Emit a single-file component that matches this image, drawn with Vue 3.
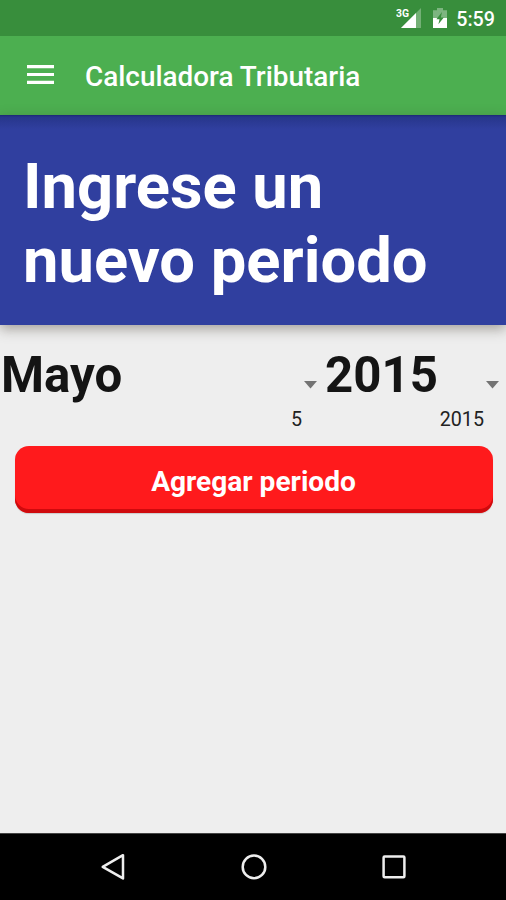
<script setup>
const month = { name: 'Mayo', value: '5' }
const year = { name: '2015', value: '2015' }
</script>

<template>
  <div class="screen">
    <div class="status">
      <svg class="signal" width="27" height="24" viewBox="0 0 27 24" aria-hidden="true">
        <path d="M25 4V24H5Z" fill="#fff" fill-opacity=".3" />
        <path d="M20 9V24H5Z" fill="#fff" />
        <text x="0" y="13" textLength="13" lengthAdjust="spacingAndGlyphs">3G</text>
      </svg>
      <svg class="battery" width="14" height="20" viewBox="0 0 14 20" aria-hidden="true">
        <path d="M0 2.2H4V0H10V2.2H14V10H0Z" fill="#fff" fill-opacity=".35" />
        <path d="M0 10H14V20H0Z" fill="#fff" />
        <path d="M9 4L3.4 11.3H6.5L5.4 16.2L10.8 9.4H7.8Z" fill="#388e3c" />
      </svg>
      <span class="clock">5:59</span>
    </div>

    <header class="toolbar">
      <svg class="menu" width="27" height="19" viewBox="0 0 27 19" aria-hidden="true">
        <path d="M0 0H27V3.2H0ZM0 7.9H27V11.1H0ZM0 15.8H27V19H0Z" fill="#fff" />
      </svg>
      <span class="title">Calculadora Tributaria</span>
    </header>

    <h1 class="banner">Ingrese un<br />nuevo periodo</h1>

    <main class="content">
      <div class="pickers">
        <div class="picker month">
          <span>{{ month.name }}</span>
          <svg width="13" height="8" viewBox="0 0 13 8"><path d="M0 0H13L6.5 7.5Z" fill="#737373" /></svg>
        </div>
        <div class="picker year">
          <span>{{ year.name }}</span>
          <svg width="13" height="8" viewBox="0 0 13 8"><path d="M0 0H13L6.5 7.5Z" fill="#737373" /></svg>
        </div>
      </div>
      <div class="values">
        <span class="value-month">{{ month.value }}</span>
        <span class="value-year">{{ year.value }}</span>
      </div>
      <button class="add">Agregar periodo</button>
    </main>

    <nav class="navbar">
      <svg width="26" height="28" viewBox="0 0 26 28"><path d="M23 2.2V25.4L2.7 13.8Z" /></svg>
      <svg width="26" height="28" viewBox="0 0 26 28"><circle cx="13" cy="13.9" r="11.3" /></svg>
      <svg width="26" height="28" viewBox="0 0 26 28"><rect x="2.6" y="3.4" width="20.8" height="20.8" rx="1" /></svg>
    </nav>
  </div>
</template>

<style>
body {
  margin: 0;
}
</style>

<style scoped>
.screen {
  display: flex;
  flex-direction: column;
  width: 506px;
  height: 900px;
  overflow: hidden;
  background: #eee;
  font-family: Roboto, "Liberation Sans", sans-serif;
}

.status {
  display: flex;
  justify-content: flex-end;
  align-items: flex-start;
  box-sizing: border-box;
  height: 36px;
  padding-right: 11px;
  background: #388e3c;
}

.signal {
  margin: 4px 10px 0 0;
}

.signal text {
  font-size: 11px;
  font-weight: 700;
  fill: #fff;
}

.battery {
  margin: 8px 9px 0 0;
}

.clock {
  margin-top: 8px;
  color: #fff;
  font-size: 19.7px;
  font-weight: 500;
  line-height: 24px;
}

.toolbar {
  display: flex;
  align-items: center;
  box-sizing: border-box;
  height: 79px;
  padding: 0 27px;
  background: #4caf50;
}

.menu {
  margin-top: -3px;
}

.title {
  margin: 3px 0 0 31px;
  color: #fff;
  font-size: 27.9px;
  font-weight: 500;
  line-height: 36px;
}

.banner {
  position: relative;
  box-sizing: border-box;
  height: 210px;
  margin: 0;
  padding: 34px 23px 0;
  background: linear-gradient(#1b2875 0, #27368b 2px, #303f9f 14px);
  box-shadow: 0 4px 12px rgba(60, 50, 40, .42);
  color: #fff;
  font-size: 63.3px;
  font-weight: 700;
  line-height: 74px;
}

.content {
  flex: 1;
  padding-top: 21px;
}

.pickers {
  display: flex;
}

.picker {
  display: flex;
  justify-content: space-between;
  align-items: flex-start;
  box-sizing: border-box;
  height: 62px;
  color: #141414;
  font-size: 49.2px;
  font-weight: 700;
  line-height: 58px;
}

.picker svg {
  margin-top: 35px;
}

.month {
  width: 325px;
  padding: 0 8px 0 1px;
}

.year {
  width: 181px;
  padding-right: 7px;
}

.values {
  display: flex;
  height: 38px;
  color: #222;
  font-size: 19.7px;
  line-height: 24px;
}

.value-month {
  width: 302px;
  text-align: right;
}

.value-year {
  width: 182px;
  text-align: right;
}

.add {
  display: block;
  box-sizing: border-box;
  width: 478px;
  height: 67px;
  margin: 0 14px 0 14.5px;
  padding: 4px 0 0;
  border: 0;
  border-radius: 14px;
  background: #ff1a1c;
  box-shadow: inset 0 -4px 0 #cf0a0d, 0 1px 1px rgba(0, 0, 0, .15);
  color: #fff;
  font-family: inherit;
  font-size: 28.1px;
  font-weight: 700;
  line-height: 34px;
}

.navbar {
  display: flex;
  justify-content: center;
  align-items: center;
  gap: 114.5px;
  box-sizing: border-box;
  height: 67px;
  padding-left: 1px;
  border-top: 1px solid #444;
  background: #000;
}

.navbar svg {
  fill: none;
  stroke: #eee;
  stroke-width: 2.5;
  stroke-linejoin: round;
}
</style>
